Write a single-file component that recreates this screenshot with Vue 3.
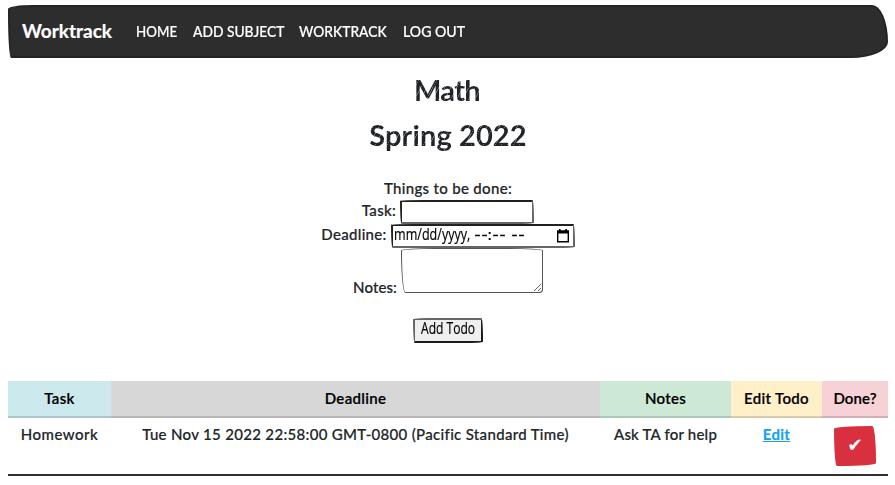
<script setup>
const links = [
  { label: 'HOME', cls: 'l-home' },
  { label: 'ADD SUBJECT', cls: 'l-add' },
  { label: 'WORKTRACK', cls: 'l-work' },
  { label: 'LOG OUT', cls: 'l-out' },
]
const columns = [
  { label: 'Task', cls: 'info' },
  { label: 'Deadline', cls: 'secondary' },
  { label: 'Notes', cls: 'success' },
  { label: 'Edit Todo', cls: 'warning' },
  { label: 'Done?', cls: 'danger' },
]
</script>

<template>
  <div class="page">
    <nav class="navbar">
      <a class="brand">Worktrack</a>
      <a v-for="l in links" :key="l.label" class="link" :class="l.cls"><span>{{ l.label }}</span></a>
    </nav>

    <h1 class="subject"><span>Math</span></h1>
    <h1 class="term"><span>Spring 2022</span></h1>

    <form class="form" @submit.prevent>
      <div class="line intro">Things to be done:</div>
      <div class="line task"><label>Task:</label><input class="field" type="text" /></div>
      <div class="line deadline">
        <label>Deadline:</label>
        <div class="date">
          <span class="narrow mask">mm/dd/yyyy,</span>
          <span class="dashes time">--</span><span class="colon">:</span><span class="dashes">--</span>
          <span class="dashes meridiem">--</span>
          <svg class="calendar" width="14" height="14" viewBox="0 0 14 14">
            <path d="M1.7 2.2V12.8H12.3V2.2Z" fill="none" stroke="#000" stroke-width="1.4" />
            <path d="M1 1.5H13V4.6H1ZM3 0H4.6V2H3ZM9.4 0H11V2H9.4Z" fill="#000" />
          </svg>
        </div>
      </div>
      <div class="line notes"><label>Notes:</label>
        <div class="area">
          <svg class="grip" width="9" height="9" viewBox="0 0 9 9">
            <path d="M1 8L8 1M5 8L8 5" stroke="#555" stroke-width="0.9" />
          </svg>
        </div>
      </div>
      <button class="add"><span class="narrow">Add Todo</span></button>
    </form>

    <div class="table">
      <div v-for="c in columns" :key="c.label" class="head" :class="c.cls"><span>{{ c.label }}</span></div>
      <div class="cell c-task"><span>Homework</span></div>
      <div class="cell c-date"><span>Tue Nov 15 2022 22:58:00 GMT-0800 (Pacific Standard Time)</span></div>
      <div class="cell c-notes"><span>Ask TA for help</span></div>
      <div class="cell c-edit"><a class="edit">Edit</a></div>
      <div class="cell c-done"><button class="done">✔</button></div>
    </div>
  </div>
</template>

<style>
body { background: #fff; }
</style>

<style scoped>
* { box-sizing: border-box; }
.page {
  width: 895px;
  height: 485px;
  padding: 5px 7px 0 8px;
  overflow: hidden;
  font-family: Lato, "Noto Sans", sans-serif;
  font-size: 15px;
  font-weight: 500;
  -webkit-text-stroke: 0.2px;
  font-variant-ligatures: none;
  letter-spacing: 0.32px;
  color: #212529;
}
.navbar {
  display: flex;
  align-items: center;
  height: 53px;
  padding: 0 12px 2px;
  background: #2d2d2d;
  border: 2px solid #212529;
  border-radius: 25px 16px 37px 3px / 4px 37px 16px 45px;
  color: #fff;
}
.brand { width: 114px; font-size: 19px; font-weight: 700; letter-spacing: 0; white-space: nowrap; }
.link { font-size: 15px; font-weight: 500; letter-spacing: 0; white-space: nowrap; }
.link span { display: inline-block; transform: scaleX(0.92); transform-origin: left center; }
.l-home { width: 57px; }
.l-home span { transform: scaleX(0.89); }
.l-add { width: 106px; }
.l-work { width: 104px; }
.l-out span { transform: scaleX(0.94); }
h1 {
  margin: 0;
  text-align: center;
  font-size: 29px;
  font-weight: 700;
  line-height: 43px;
  -webkit-text-stroke: 0;
}
h1 span {
  background: repeating-linear-gradient(118deg, #212529 0 2.4px, #6d7073 2.4px 3.1px, #212529 3.1px 5.3px);
  background-clip: text;
  -webkit-background-clip: text;
  color: transparent;
}
.subject { padding: 10px 2px 0 0; height: 55px; letter-spacing: -0.7px; }
.term { height: 44px; letter-spacing: 0.1px; }
.form {
  display: flex;
  flex-direction: column;
  align-items: center;
  padding-top: 20px;
}
.line { display: flex; white-space: nowrap; }
.intro { height: 23px; line-height: 23px; }
.task { height: 24px; gap: 4px; line-height: 21px; }
.deadline { height: 24px; gap: 4px; line-height: 20px; }
.notes { height: 46px; gap: 4px; align-items: flex-end; line-height: 14px; }
.notes label { letter-spacing: 0.1px; }
.field {
  width: 134px;
  height: 24px;
  margin: 0;
  padding: 0;
  border: 2px solid #212121;
  border-right-color: #666;
  border-bottom-color: #666;
  border-radius: 60px 4px 50px 4px / 3px 50px 3px 60px;
  background: #fff;
}
.date {
  position: relative;
  display: flex;
  width: 184px;
  height: 24px;
  border: 2px solid #212121;
  border-right-color: #666;
  border-bottom-color: #666;
  border-radius: 60px 4px 50px 4px / 3px 50px 3px 60px;
  color: #000;
  line-height: 16px;
}
.narrow {
  display: inline-block;
  transform: scaleX(0.74);
  transform-origin: left center;
  color: #000;
  font-family: "Open Sans", sans-serif;
  font-size: 17px;
  font-weight: 400;
  letter-spacing: 0;
}
.add .narrow { transform: scaleX(0.71); }
.mask { width: 80px; margin-left: 1px; }
.dashes { width: 14px; letter-spacing: 0; transform: scaleX(1.25); transform-origin: left center; }
.colon { width: 4px; }
.meridiem { margin-left: 5px; }
.calendar { position: absolute; right: 3px; top: 3px; }
.area {
  position: relative;
  width: 142px;
  height: 45px;
  margin-bottom: 1px;
  border: 1px solid #555;
  border-radius: 40px 40px 4px 5px / 3px 3px 4px 50px;
}
.grip { position: absolute; right: 0; bottom: 0; }
.add {
  display: flex;
  align-items: center;
  width: 70px;
  height: 25px;
  margin: 24px 0 0;
  padding: 0 0 5px 6px;
  border: 2px solid #666;
  border-right-color: #1b1b1b;
  border-bottom-color: #1b1b1b;
  border-radius: 60px 4px 50px 4px / 3px 50px 3px 60px;
  background: #efefef;
  line-height: 18px;
  white-space: nowrap;
}
.table {
  display: grid;
  grid-template-columns: 103px 489px 131px 91px 66px;
  grid-template-rows: 37px 58px;
  margin-top: 38px;
  text-align: center;
}
.head {
  padding-top: 7px;
  border-bottom: 2px solid rgba(0, 0, 0, 0.15);
  color: #000;
  font-weight: 600;
  line-height: 20px;
}
.info { background: #cce9ee; }
.secondary { background: #d7d7d7; }
.success { background: #cde9d6; }
.warning { background: #fff0ca; }
.danger { background: #f6d1d5; letter-spacing: 0.1px; }
.cell {
  padding-top: 6px;
  border-bottom: 2px solid #2d2d2d;
  line-height: 20px;
  white-space: nowrap;
}
.c-task { letter-spacing: 0.5px; }
.c-done { padding-top: 8px; }
.c-notes { letter-spacing: 0.2px; }
.edit { color: #17a2f2; font-weight: 700; text-decoration: underline; }
.done {
  display: block;
  width: 42px;
  height: 40px;
  margin: 0 auto;
  padding: 0 0 4px;
  border: 0;
  border-radius: 40px 4px 38px 3px / 3px 38px 3px 40px;
  background: #d9303f;
  color: #fff;
  font-family: "DejaVu Sans", sans-serif;
  font-size: 18px;
}
</style>
